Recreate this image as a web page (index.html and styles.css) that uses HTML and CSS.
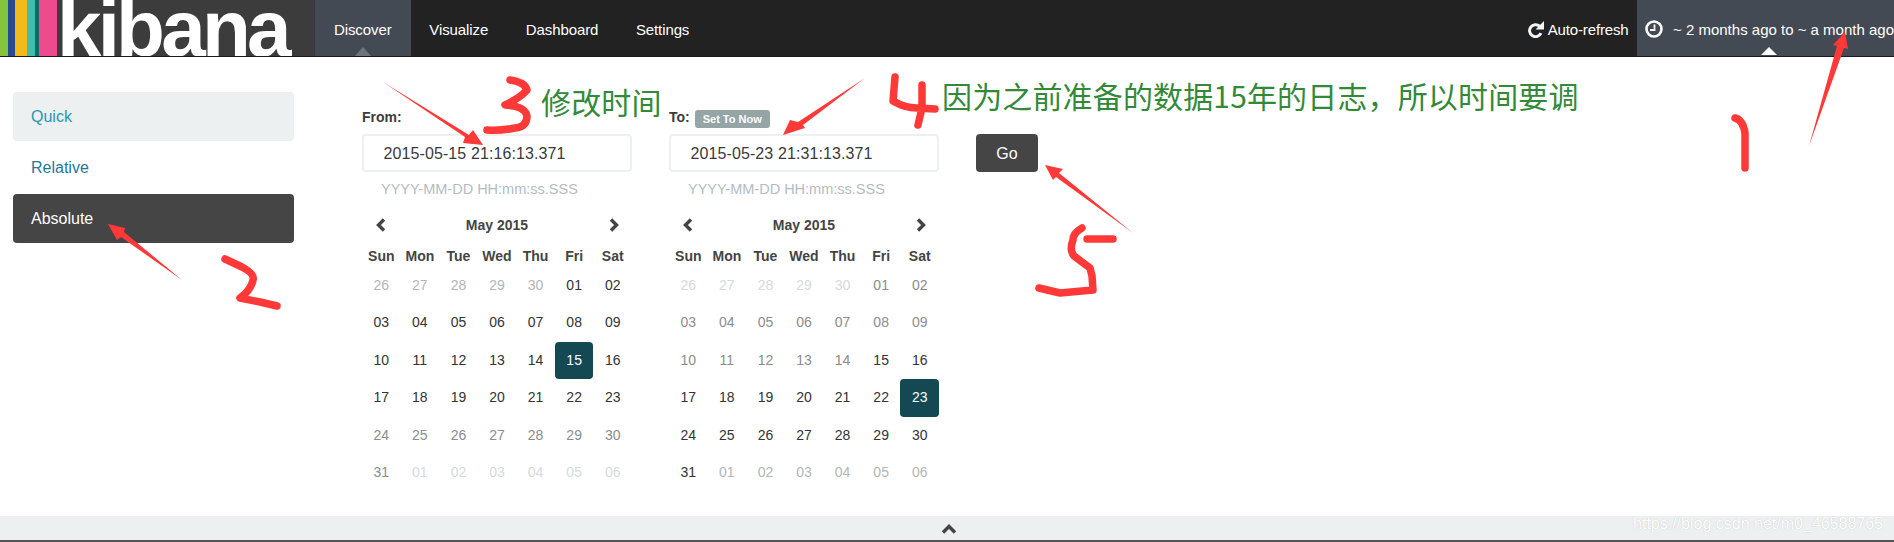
FILE: index.html
```html
<!DOCTYPE html>
<html lang="zh-CN">
<head>
<meta charset="UTF-8" />
<title>Kibana</title>
<link rel="stylesheet" href="styles.css">
</head>
<body>

<!-- top bar -->
<div class="navbar">
  <div class="logo">
    <i class="stripe s-green"></i><i class="stripe s-blue"></i><i class="stripe s-yellow"></i><i class="stripe s-teal"></i><i class="stripe s-dark"></i><i class="stripe s-pink"></i>
    <span class="logo-text">kibana</span>
  </div>
  <a class="nav-link active">Discover</a>
  <a class="nav-link">Visualize</a>
  <a class="nav-link">Dashboard</a>
  <a class="nav-link">Settings</a>
  <div class="auto-refresh">
    <svg class="icon-refresh" viewBox="0 0 17 17"><path d="M14 12.2A6 6 0 1 1 12.6 5.2"/><polygon points="17,0 17,8.5 8.5,8.5"/></svg>
    <span>Auto-refresh</span>
  </div>
  <div class="time-range">
    <svg class="icon-clock" viewBox="0 0 18 18"><circle cx="9" cy="9" r="7.5"/><path d="M9.5 4.5V10H5"/></svg>
    <span>~ 2 months ago to ~ a month ago</span>
  </div>
</div>

<!-- time picker -->
<div class="config">
  <ul class="pills">
    <li class="pill pill-hover">Quick</li>
    <li class="pill">Relative</li>
    <li class="pill pill-active">Absolute</li>
  </ul>

  <div class="picker">
    <div class="label-row"><label>From:</label></div>
    <div class="date-input">2015-05-15 21:16:13.371</div>
    <div class="help">YYYY-MM-DD HH:mm:ss.SSS</div>
    <div class="cal-month">
      <svg class="chev" viewBox="0 0 10 14"><path d="M8 1.5L2.5 7L8 12.5"/></svg>
      <b>May 2015</b>
      <svg class="chev" viewBox="0 0 10 14"><path d="M2 1.5L7.5 7L2 12.5"/></svg>
    </div>
    <div class="cal-grid">
      <b>Sun</b><b>Mon</b><b>Tue</b><b>Wed</b><b>Thu</b><b>Fri</b><b>Sat</b>
    </div>
    <div class="cal-grid cal-days">
      <span class="mid">26</span><span class="mid">27</span><span class="mid">28</span><span class="mid">29</span><span class="mid">30</span><span>01</span><span>02</span>
      <span>03</span><span>04</span><span>05</span><span>06</span><span>07</span><span>08</span><span>09</span>
      <span>10</span><span>11</span><span>12</span><span>13</span><span>14</span><span class="sel">15</span><span>16</span>
      <span>17</span><span>18</span><span>19</span><span>20</span><span>21</span><span>22</span><span>23</span>
      <span class="off">24</span><span class="off">25</span><span class="off">26</span><span class="off">27</span><span class="off">28</span><span class="off">29</span><span class="off">30</span>
      <span class="off">31</span><span class="faint">01</span><span class="faint">02</span><span class="faint">03</span><span class="faint">04</span><span class="faint">05</span><span class="faint">06</span>
    </div>
  </div>

  <div class="picker">
    <div class="label-row"><label>To:</label><span class="set-now">Set To Now</span></div>
    <div class="date-input">2015-05-23 21:31:13.371</div>
    <div class="help">YYYY-MM-DD HH:mm:ss.SSS</div>
    <div class="cal-month">
      <svg class="chev" viewBox="0 0 10 14"><path d="M8 1.5L2.5 7L8 12.5"/></svg>
      <b>May 2015</b>
      <svg class="chev" viewBox="0 0 10 14"><path d="M2 1.5L7.5 7L2 12.5"/></svg>
    </div>
    <div class="cal-grid">
      <b>Sun</b><b>Mon</b><b>Tue</b><b>Wed</b><b>Thu</b><b>Fri</b><b>Sat</b>
    </div>
    <div class="cal-grid cal-days">
      <span class="faint">26</span><span class="faint">27</span><span class="faint">28</span><span class="faint">29</span><span class="faint">30</span><span class="off">01</span><span class="off">02</span>
      <span class="off">03</span><span class="off">04</span><span class="off">05</span><span class="off">06</span><span class="off">07</span><span class="off">08</span><span class="off">09</span>
      <span class="off">10</span><span class="off">11</span><span class="off">12</span><span class="off">13</span><span class="off">14</span><span>15</span><span>16</span>
      <span>17</span><span>18</span><span>19</span><span>20</span><span>21</span><span>22</span><span class="sel">23</span>
      <span>24</span><span>25</span><span>26</span><span>27</span><span>28</span><span>29</span><span>30</span>
      <span>31</span><span class="mid">01</span><span class="mid">02</span><span class="mid">03</span><span class="mid">04</span><span class="mid">05</span><span class="mid">06</span>
    </div>
  </div>

  <button class="go">Go</button>
</div>

<!-- collapse bar -->
<div class="collapse-bar">
  <svg class="chev-up" viewBox="0 0 16 10"><path d="M2 8.5L8 2.5L14 8.5"/></svg>
  <span class="watermark">https://blog.csdn.net/m0_46588765</span>
</div>

<!-- notes drawn over the screenshot -->
<span class="note note-a">修改时间</span>
<span class="note note-b">因为之前准备的数据15年的日志，所以时间要调</span>
<svg class="ink" viewBox="0 0 1894 542">
  <polygon points="1809,146 1837,46 1833,45 1845,32 1848,49 1844,48"/>
  <path d="M1735 118Q1743 120 1745 133L1745 168"/>
  <polygon points="182,280 124,232 125,228 108,224 117,240 121,237"/>
  <path d="M225 259L242 267Q255 274 253 280Q251 290 240 298L260 302L277 306"/>
  <polygon points="383,82 469,135 473,130 483,145 463,143 465,137"/>
  <path d="M510 80Q525 82 527 90Q520 98 505 105Q525 106 527 116Q527 127 515 128Q500 131 487 130"/>
  <polygon points="865,78 798,122 790,120 783,135 805,128 803,125"/>
  <path d="M895 77L893 101Q905 108 917 108L935 109M922 85L922 108L918 125"/>
  <polygon points="1133,233 1059,173 1063,169 1045,165 1053,180 1056,177"/>
  <path d="M1082 228Q1073 233 1073 240Q1069 250 1074 256L1090 268L1092 276L1093 290L1060 293L1039 288M1087 239L1113 239"/>
</svg>

</body>
</html>
```

FILE: styles.css
```css
* {
  box-sizing: border-box;
  margin: 0;
  padding: 0;
}

html, body {
  height: 100%;
}

body {
  position: relative;
  width: 1894px;
  height: 542px;
  overflow: hidden;
  background: #fff;
  color: #333;
  font-family: "Liberation Sans", Arial, sans-serif;
  font-size: 14px;
}

/* Top bar */
.navbar {
  display: flex;
  height: 57px;
  background: #222;
  border-bottom: 1px solid #1a1a1a;
  color: #fff;
  font-size: 15px;
}

.logo {
  display: flex;
  width: 315px;
  height: 56px;
  overflow: hidden;
  background: #3c3c3c;
}

.stripe { display: block; height: 100%; }
.s-green { width: 7.5px; background: #85c441; }
.s-blue { width: 7.5px; background: #2a4a94; }
.s-yellow { width: 12px; background: #f3bb1a; }
.s-teal { width: 8px; background: #3ebdb0; }
.s-dark { width: 3.5px; background: #0f6d62; }
.s-pink { width: 18.5px; background: #ee4a8e; }

.logo-text {
  font-size: 80px;
  font-weight: bold;
  letter-spacing: -3.8px;
  line-height: 57px;
  color: #fff;
}

.nav-link {
  position: relative;
  display: flex;
  align-items: center;
  height: 56px;
  padding: 2px 18.8px 0;
  letter-spacing: -0.1px;
}

.nav-link.active {
  padding: 2px 19px 0;
  background: #444a53;
}

.nav-link.active::after {
  content: "";
  position: absolute;
  left: 50%;
  bottom: 0;
  margin-left: -8px;
  border-left: 8px solid transparent;
  border-right: 8px solid transparent;
  border-bottom: 9px solid #6f747b;
}

.auto-refresh {
  display: flex;
  align-items: center;
  gap: 4px;
  margin-left: auto;
  margin-right: 8.5px;
  padding-top: 2px;
  letter-spacing: -0.15px;
}

.icon-refresh {
  width: 17px;
  height: 17px;
}

.icon-refresh path {
  fill: none;
  stroke: #f2f6f8;
  stroke-width: 3;
}

.icon-refresh polygon {
  fill: #f2f6f8;
}

.time-range {
  position: relative;
  display: flex;
  align-items: center;
  gap: 10px;
  flex: 0 0 256px;
  height: 56px;
  padding: 2px 0 0 8px;
  background: #444a53;
  white-space: nowrap;
}

.time-range::after {
  content: "";
  position: absolute;
  left: 124px;
  bottom: 1px;
  border-left: 8px solid transparent;
  border-right: 8px solid transparent;
  border-bottom: 8px solid #fff;
}

.icon-clock {
  width: 18px;
  height: 18px;
  flex: none;
}

.icon-clock circle {
  fill: none;
  stroke: #fff;
  stroke-width: 2.6;
}

.icon-clock path {
  fill: none;
  stroke: #fff;
  stroke-width: 1.8;
}

/* Time picker */
.config {
  display: flex;
  height: 459px;
  padding: 50px 0 0 13px;
}

.pills {
  width: 281px;
  margin: -15px 68px 0 0;
  list-style: none;
  font-size: 16px;
}

.pill {
  display: flex;
  align-items: center;
  height: 48.8px;
  margin-bottom: 2.2px;
  padding: 2px 0 0 18px;
  border-radius: 4px;
  color: #23799a;
}

.pill-hover {
  background: #ecf0f1;
  color: #2a96b0;
}

.pill-active {
  background: #454545;
  color: #fff;
}

.picker {
  width: 270px;
  margin-right: 37px;
}

.label-row {
  display: flex;
  align-items: center;
  gap: 5px;
  height: 20px;
  margin-bottom: 7px;
}

.label-row label {
  font-weight: bold;
  color: #3c3c3c;
}

.set-now {
  width: 75px;
  height: 18px;
  margin-top: 4px;
  border-radius: 3px;
  background: #95a5a6;
  color: #fff;
  font-size: 11px;
  font-weight: bold;
  line-height: 18px;
  text-align: center;
}

.date-input {
  height: 38px;
  padding-left: 19.5px;
  border: 2px solid #ecf0f1;
  border-radius: 4px;
  font-size: 16px;
  letter-spacing: 0.1px;
  line-height: 35px;
  color: #3a3a3a;
}

.help {
  height: 20px;
  margin: 7px 0;
  padding-left: 19px;
  font-size: 14.5px;
  line-height: 20px;
  color: #b4bcc2;
}

.cal-month {
  display: flex;
  align-items: center;
  justify-content: space-between;
  height: 38px;
  padding: 0 13.5px;
  color: #444;
}

.chev {
  width: 10px;
  height: 14px;
}

.chev path, .chev-up path {
  fill: none;
  stroke: #444;
  stroke-width: 3.4;
}

.cal-grid {
  display: grid;
  grid-template-columns: repeat(7, 1fr);
  height: 23px;
  align-items: center;
  text-align: center;
  color: #444;
}

.cal-days {
  grid-auto-rows: 37.4px;
  height: auto;
  align-items: stretch;
  color: #333;
}

.cal-days span {
  line-height: 37.4px;
}

.cal-days .mid { color: #b2b6b9; }
.cal-days .off { color: #8c8c8c; }
.cal-days .faint { color: #d6dadc; }

.cal-days .sel {
  border-radius: 4px;
  background: #144852;
  color: #fff;
}

.go {
  width: 62px;
  height: 38px;
  margin-top: 27px;
  padding-top: 2px;
  border: 0;
  border-radius: 4px;
  background: #454545;
  color: #fff;
  font-family: inherit;
  font-size: 16px;
}

/* Collapse bar */
.collapse-bar {
  position: relative;
  display: flex;
  justify-content: center;
  height: 26px;
  padding: 8px 0 0 4px;
  background: #ecf0f1;
  border-bottom: 2px solid #555;
}

.chev-up {
  width: 16px;
  height: 10px;
}

.watermark {
  position: absolute;
  top: 0;
  right: 11px;
  font-size: 16px;
  line-height: 15px;
  color: #fff;
  text-shadow: 0 0 1px #b8bcbe;
}

/* Notes */
.note {
  position: absolute;
  font-family: "Noto Sans CJK SC", sans-serif;
  font-size: 30px;
  letter-spacing: 0.15px;
  line-height: 40px;
  color: #328a39;
  white-space: nowrap;
}

.note-a { left: 541px; top: 81px; }
.note-b { left: 942px; top: 75px; }

.ink {
  position: absolute;
  left: 0;
  top: 0;
  width: 1894px;
  height: 542px;
  pointer-events: none;
}

.ink polygon {
  fill: #ff3838;
}

.ink path {
  fill: none;
  stroke: #ff3838;
  stroke-width: 7.5;
  stroke-linecap: round;
  stroke-linejoin: round;
}
```
